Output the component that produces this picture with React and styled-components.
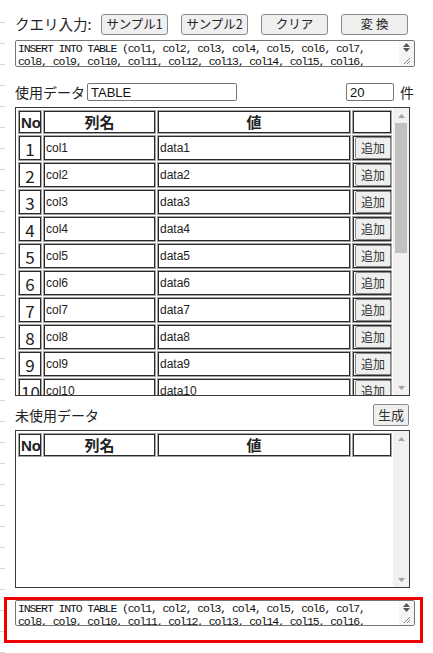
import React from "react";
import styled, { createGlobalStyle } from "styled-components";

const GlobalStyle = createGlobalStyle`
  html, body {
    margin: 0;
    padding: 0;
    background: #ffffff;
  }
  body {
    font-family: "Noto Sans CJK JP", "Liberation Sans", sans-serif;
    color: #222;
  }
`;

const Page = styled.div`
  width: 433px;
  min-height: 653px;
  box-sizing: border-box;
  padding: 14px 0 0 15px;
  background-image: repeating-linear-gradient(
    to bottom,
    transparent 0,
    transparent 20px,
    #d6d6d6 20px,
    #d6d6d6 21px
  );
  background-size: 5px 100%;
  background-repeat: no-repeat;
  background-position: 0 2px;
`;

const Row = styled.div`
  display: flex;
  align-items: center;
  width: ${(p) => p.w || 400}px;
  height: ${(p) => p.h || 21}px;
  margin-top: ${(p) => p.mt || 0}px;
`;

const Label = styled.span`
  flex: none;
  width: ${(p) => (p.w ? `${p.w}px` : "auto")};
  margin-left: ${(p) => p.ml || 0}px;
  font-size: ${(p) => p.size || 14}px;
  color: #222;
  line-height: 1;
  white-space: nowrap;
`;

const TopButton = styled.button`
  width: 67px;
  height: 21px;
  margin-right: 13px;
  padding: 0;
  font-family: "Noto Sans CJK JP", sans-serif;
  font-size: 12.5px;
  color: #222;
  background: #efefef;
  border: 1px solid #8a8a8a;
  border-radius: 3px;
  line-height: 1;
  &:last-child {
    margin-right: 0;
  }
`;

/* textarea with its little scroll column drawn beside it */
const SqlBox = styled.div`
  display: flex;
  box-sizing: border-box;
  width: 400px;
  height: ${(p) => p.h || 27}px;
  margin-top: ${(p) => p.mt || 0}px;
  border: 1px solid #767676;
  border-radius: 2px;
  background: #fff;
  overflow: hidden;
`;

const SqlText = styled.textarea`
  flex: 1;
  min-width: 0;
  margin: 0;
  padding: 1px 2px;
  border: none;
  outline: none;
  resize: none;
  overflow: hidden;
  font-family: "Liberation Mono", "DejaVu Sans Mono", monospace;
  font-size: 11.5px;
  letter-spacing: -1.12px;
  line-height: 13px;
  color: #111;
  background: transparent;
`;

const MiniBar = styled.div`
  flex: none;
  width: 15px;
  display: flex;
  flex-direction: column;
  align-items: center;
  justify-content: space-between;
  padding: 2px 0 1px;
  box-sizing: border-box;
  background: #f4f4f4;
`;

const ScrollBox = styled.div`
  display: flex;
  box-sizing: border-box;
  width: 395px;
  height: ${(p) => p.h}px;
  margin-top: ${(p) => p.mt || 0}px;
  border: 1px solid #3a3a3a;
  background: #fff;
`;

const Viewport = styled.div`
  flex: 1;
  min-width: 0;
  overflow: hidden;
`;

const ScrollBar = styled.div`
  flex: none;
  width: 16px;
  display: flex;
  flex-direction: column;
  background: #f1f1f1;
`;

const ArrowButton = styled.div`
  height: 15px;
  flex: none;
  display: flex;
  align-items: center;
  justify-content: center;
`;

const Track = styled.div`
  flex: 1;
  padding: 0 2px;
`;

const Thumb = styled.div`
  height: ${(p) => p.size}px;
  background: #c1c1c1;
`;

const Grid = styled.table`
  width: 100%;
  border-collapse: separate;
  border-spacing: 1px;
  border: 1px solid transparent;
  table-layout: fixed;
`;

const Cell = styled.td`
  box-sizing: border-box;
  height: ${(p) => (p.head ? 24 : 26)}px;
  padding: 0 2px;
  border: 1px solid #a4a4a4;
  box-shadow: inset 0 0 0 1px #2a2a2a;
  text-align: ${(p) => p.align || "left"};
  font-family: ${(p) =>
    p.head
      ? '"Liberation Sans", "Noto Sans CJK JP", sans-serif'
      : p.num
      ? '"Noto Sans CJK JP", sans-serif'
      : '"Liberation Sans", Arial, sans-serif'};
  font-size: ${(p) => (p.head ? 15 : p.num ? 17 : 12)}px;
  font-weight: ${(p) => (p.head ? 700 : 400)};
  color: #222;
  line-height: 1;
  white-space: nowrap;
  overflow: hidden;
  vertical-align: middle;
`;

const AddButton = styled.button`
  display: block;
  width: 36px;
  height: 22px;
  margin: 0 auto;
  padding: 0;
  font-family: "Noto Sans CJK JP", sans-serif;
  font-size: 12px;
  color: #333;
  background: #efefef;
  border: 1px solid #8a8a8a;
  border-radius: 2px;
  line-height: 1;
`;

const SmallButton = styled(AddButton)`
  margin: 0;
  font-size: 13px;
`;

const Highlight = styled.div`
  box-sizing: border-box;
  width: 419px;
  height: 46px;
  margin: 9px 0 0 -11px;
  padding: 0 0 0 8px;
  border: 3px solid #ee0000;
`;

const Triangle = ({ down, color = "#a3a3a3" }) => (
  <svg width="7" height="4" viewBox="0 0 7 4">
    <path d={down ? "M0 0 L7 0 L3.5 4 Z" : "M0 4 L7 4 L3.5 0 Z"} fill={color} />
  </svg>
);

const Grip = () => (
  <svg width="9" height="9" viewBox="0 0 9 9">
    <path d="M8 2 L2 8 M8 5 L5 8" stroke="#888" strokeWidth="1" />
  </svg>
);

const FakeScrollBar = ({ thumb }) => (
  <ScrollBar>
    <ArrowButton>
      <Triangle />
    </ArrowButton>
    <Track>{thumb ? <Thumb size={thumb} /> : null}</Track>
    <ArrowButton>
      <Triangle down />
    </ArrowButton>
  </ScrollBar>
);

const SqlField = ({ h, mt, value }) => (
  <SqlBox h={h} mt={mt}>
    <SqlText defaultValue={value} spellCheck={false} />
    <MiniBar>
      <div style={{ display: "flex", flexDirection: "column", gap: 1 }}>
        <Triangle color="#555" />
        <Triangle down color="#555" />
      </div>
      <Grip />
    </MiniBar>
  </SqlBox>
);

const cols = [24, 113, 194, 40];

const ColGroup = () => (
  <colgroup>
    {cols.map((w, i) => (
      <col key={i} style={{ width: w }} />
    ))}
  </colgroup>
);

const HeaderRow = () => (
  <tr>
    <Cell head align="center">No</Cell>
    <Cell head align="center">列名</Cell>
    <Cell head align="center">値</Cell>
    <Cell head />
  </tr>
);

const rows = Array.from({ length: 20 }, (_, i) => i + 1);
const colNames = rows.map((n) => `col${n}`).join(", ");
const values = rows.map((n) => `'data${n}'`).join(", ");
const sql = `INSERT INTO TABLE (${colNames}) VALUES (${values});`;

export default function App() {
  return (
    <>
      <GlobalStyle />
      <Page>
        <Row>
          <Label w={86} size={14.5}>クエリ入力:</Label>
          <TopButton>サンプル1</TopButton>
          <TopButton>サンプル2</TopButton>
          <TopButton>クリア</TopButton>
          <TopButton>変 換</TopButton>
        </Row>
        <SqlField mt={5} h={27} value={sql} />

        <Row mt={16} h={18}>
          <Label w={72}>使用データ</Label>
          <TextInput w={150} defaultValue="TABLE" />
          <Spacer />
          <TextInput w={48} defaultValue="20" />
          <Label ml={6} w={15}>件</Label>
        </Row>

        <ScrollBox h={289} mt={6}>
          <Viewport>
            <Grid>
              <ColGroup />
              <tbody>
                <HeaderRow />
                {rows.map((n) => (
                  <tr key={n}>
                    <Cell num align="center">{n}</Cell>
                    <Cell>{`col${n}`}</Cell>
                    <Cell>{`data${n}`}</Cell>
                    <Cell align="center">
                      <AddButton>追加</AddButton>
                    </Cell>
                  </tr>
                ))}
              </tbody>
            </Grid>
          </Viewport>
          <FakeScrollBar thumb={130} />
        </ScrollBox>

        <Row mt={8} h={21} w={394}>
          <Label>未使用データ</Label>
          <Spacer />
          <SmallButton>生成</SmallButton>
        </Row>

        <ScrollBox h={158} mt={5}>
          <Viewport>
            <Grid>
              <ColGroup />
              <tbody>
                <HeaderRow />
              </tbody>
            </Grid>
          </Viewport>
          <FakeScrollBar />
        </ScrollBox>

        <Highlight>
          <SqlField h={26} value={sql} />
        </Highlight>
      </Page>
    </>
  );
}

const TextInput = styled.input`
  box-sizing: border-box;
  width: ${(p) => p.w}px;
  height: 18px;
  padding: 0 3px;
  border: 1px solid #767676;
  border-radius: 2px;
  font-family: "Liberation Sans", Arial, sans-serif;
  font-size: 13px;
  color: #111;
`;

const Spacer = styled.div`
  flex: 1;
`;
